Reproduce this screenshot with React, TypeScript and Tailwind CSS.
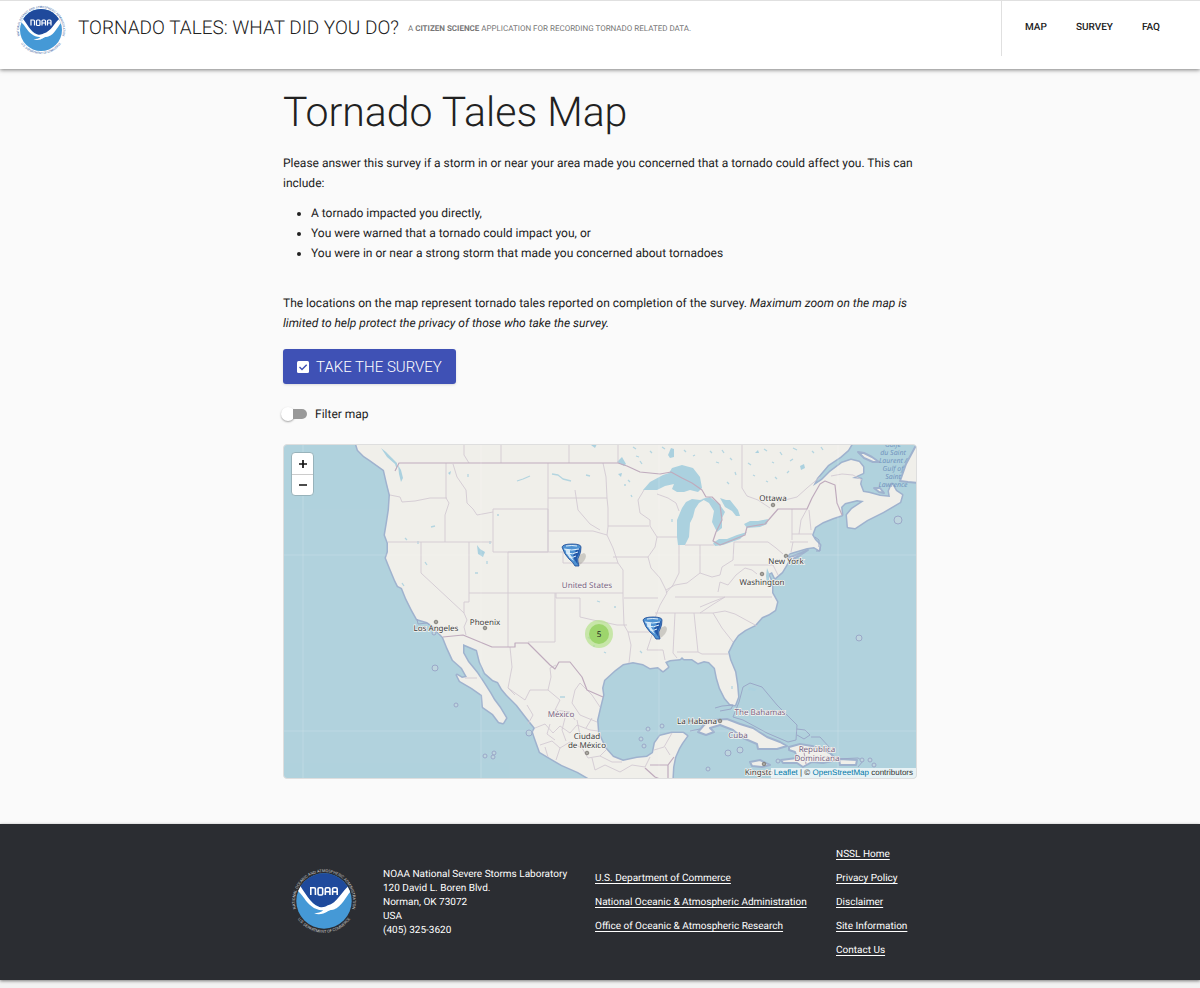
import { useState } from "react";

const navLinks = ["Map", "Survey", "FAQ"];

const agencyLinks = [
  "U.S. Department of Commerce",
  "National Oceanic & Atmospheric Administration",
  "Office of Oceanic & Atmospheric Research",
];

const siteLinks = [
  "NSSL Home",
  "Privacy Policy",
  "Disclaimer",
  "Site Information",
  "Contact Us",
];

const mainland =
  "M355 440L358 450L364 456L370 460L377 465L384 470L387 483L390 495L389 510L387 523L385 535L388 543L388 552L386 558L390 568L395 580L398 586L402 588L406 598L412 610L417 619L427 622L433 626L438 632L443 637L447 647L453 660L462 668L467 677L462 678L457 675L460 681L472 688L482 695L483 707L493 714L499 722L503 723L506 718L500 708L494 700L490 693L483 682L477 673L468 662L463 653L463 644L470 647L477 650L480 662L485 673L493 680L498 682L502 689L507 695L517 705L527 718L535 728L533 732L535 738L540 752L550 758L562 765L578 772L590 779L590 785L672 785L673 767L675 757L679 748L682 743L687 736L683 733L672 733L660 736L655 743L653 753L647 757L637 758L623 761L613 757L605 748L598 733L597 720L600 707L603 695L602 688L604 680L615 670L623 664L633 662L643 664L650 668L658 667L663 671L668 667L665 662L670 660L680 659L682 657L684 659L692 659L698 663L704 661L709 662L715 668L717 678L720 688L725 698L730 704L735 705L738 697L737 685L735 672L730 660L728 652L733 642L738 635L745 630L755 625L762 617L769 614L775 610L777 602L772 593L772 583L768 574L772 572L775 578L782 572L788 562L787 556L790 553L807 548L814 547L819 550L820 545L815 540L812 535L815 527L823 522L833 518L842 515L841 507L845 503L857 500L864 501L852 509L847 515L848 527L855 528L867 520L883 512L900 502L902 495L896 491L892 484L889 491L890 497L880 496L869 493L863 492L860 484L861 479L852 478L863 473L863 467L859 462L851 460L842 463L830 472L822 480L813 486L817 478L828 465L840 457L848 450L854 440Z";

const islands = [
  "M920 438L906 464L900 481L908 482L920 483L920 438Z",
  "M858 452L864 453L872 457L879 462L873 462L864 458Z",
  "M874 488L880 488L884 493L879 492Z",
  "M788 558L801 553L808 550L799 556L789 561Z",
  "M698 732L704 725L713 720L727 719L740 724L753 728L767 737L780 742L787 746L777 749L758 749L757 744L743 738L733 730L720 725L710 728L714 732L706 735Z",
  "M789 747L800 744L812 746L817 748L830 753L837 760L823 763L812 762L803 767L797 763L783 763L781 760L797 758L795 752L789 750Z",
  "M839 759L857 760L856 765L840 765Z",
  "M750 762L760 760L770 765L762 767L752 766Z",
];

const lakes = [
  "M643 490L650 482L663 475L669 473L672 468L682 465L693 468L700 477L702 488L698 492L690 490L684 492L677 492L672 489L674 484L665 486L657 490Z",
  "M682 508L686 502L692 499L700 500L707 498L699 503L695 509L693 517L690 523L689 537L685 545L678 545L677 537L677 520Z",
  "M702 499L710 497L720 505L725 512L722 518L722 528L717 532L712 522L714 511L709 503Z",
  "M720 498L726 500L730 500L738 510L740 516L736 516L732 511L725 507Z",
  "M713 543L719 539L727 539L737 535L747 532L740 539L723 545L715 546Z",
  "M744 524L750 521L758 521L768 519L767 524L760 527L747 528Z",
  "M671 448L674 449L674 457L670 458L668 455Z",
  "M617 462L622 457L626 464L624 466Z",
  "M477 545L480 549L485 552L483 557L478 554Z",
  "M381 448L386 452L392 458L397 463L397 470L395 464L387 457Z",
  "M398 465L401 470L403 478L401 482L399 474Z",
  "M618 474L622 473L621 477Z",
  "M749 687L757 689L755 691L748 690Z",
  "M800 466L804 464L805 468L801 470Z",
  "M755 453L758 450L759 453Z",
  "M767 568L769 573L769 583L767 585L766 576Z",
  "M448 473L451 471L450 475Z",
  "M591 445L597 444L595 448Z",
];

// short strokes for reservoirs and small lakes
const ponds =
  "M468 474v3M517 481l6-2 7-3M552 474l6 1 5 4 8 2M586 475l4 1M636 456l3 1M640 461l2 3M633 447l3 2M650 451l2 2M662 447l3 2M684 450l2 2M693 456l2-1M710 451l2 2M716 462l3 1M722 450l2 3M730 458l2 2M735 472l1 3M727 482l2 2M748 463l3 2M753 475l2 1M764 449l3 2M772 462l2 1M780 452l2 3M790 461l3-2M787 473l2-2M766 481l2 1M775 477l2 2M793 448l4 2M812 451l2 2M821 447l2 3M628 480l2 2M624 485l2 0M631 495l1 2M405 538l2 2M418 541v3M431 527l4-1M425 562l2 3M402 583l2 3M487 561v3M475 573h3M490 541v3M604 652l2 1M588 637l2 2M593 646h2M640 651l2 2M732 686v3M614 607h2M597 601l3 1M497 515h2M672 519v3M560 697h5";

const stateLines =
  "M390 495L400 497L402 502L415 501L430 498L447 498M446 463V498L449 503L445 515V542M388 542H492M421 542V573L464 613M464 613V602H469V542M453 464L457 477L466 490L467 503L473 509L477 515L493 512M493 509H548V552H493ZM508 552V647M469 593H623M508 552H563V563H618M555 593V642H528M548 463V552M548 498H607M548 531H593L607 535M603 463L606 477L607 498L608 508V527L607 535L613 548L618 563L623 570V598L624 625L628 632L631 645L629 663M608 526H649M613 557H648M556 593V598H580V617L593 620L603 622L617 625L627 625M644 490L638 500L640 513L650 520L650 526L657 537L655 547L648 557L651 568L660 578L665 588L667 593L660 605L655 618L653 632L647 650H663L665 660M624 598H658M657 537H677M679 545V573L673 585L666 593M700 545V573M685 545H714M666 590L675 585L687 583L700 573L712 577L720 575L722 567L733 560L734 542H768M734 565H773M675 597H772M655 613H713L722 628L733 642M713 613L725 611L735 614L757 626M700 607L712 602L725 597M675 613L673 653L677 658M694 613L698 652H677M698 652L702 654L728 654M628 632H650M768 542L776 548L783 554M792 509V540M807 509L801 520L799 534M809 510L811 530M792 534H812M790 542H808M793 542L791 552M718 592L720 582L728 585L736 575L745 568L752 570L757 574M773 565L778 575M657 494L668 498L676 503L679 511M464 444L464 455L469 463M501 444V463M569 444V463M618 444V463M742 444V488L747 496L758 500L770 508M777 502L797 497L807 488L820 477M831 476L842 474L853 475M853 475L862 480M725 597L712 605L700 613M575 490L578 510L590 524L600 530M464 613L467 620L464 627L466 635";

const mexicoLines =
  "M465 678H477M510 647L512 667L508 688L515 695M508 688L525 700L530 690L548 690L551 677L550 668L556 665M548 690L560 700L555 710L570 712L575 720M575 690L580 683L592 695L600 707M575 690L572 703L580 715L597 722M527 705L533 715L528 724M535 728L545 724L553 733L560 726L570 733L577 725L590 730L598 731M540 745L552 741L560 748L570 742L582 748L592 745M560 748L556 760M582 748L588 758L600 756L606 750M592 758L595 770L605 765L620 772L632 765L645 767L650 757M550 724L547 734L555 740M565 718L562 730L566 741M577 720L580 735L585 740M600 756L612 762L622 762M592 718L586 728M672 733L664 747L654 750M665 747L670 755M545 747L548 757";

const borders =
  "M395 471L399 463H618L627 466L640 472L650 473L660 474L671 472L682 478L692 483L702 490L706 497L712 497L720 505L722 520L716 532L713 541L720 545L745 535L747 527L765 524L778 509H807L812 498L820 484L825 481L830 483L835 485L837 503L842 515M443 637L463 635L492 647H515V643H528L540 655L550 665L555 669L559 662L570 662L582 677L587 690L603 697M645 768L655 777L660 779M650 765H668V779M668 765L674 757M803 746L806 764";

const maritime =
  "M743 687L750 683L762 687L777 705L797 725L796 740L788 742L767 733L743 720L733 717L739 702ZM797 729L805 730L810 735L804 739L797 735M811 737L820 737L830 748M715 708L722 706L733 705L731 709L720 711M700 729L690 731M819 547V540L815 537M816 551L820 551V547M837 759L858 758L863 761L858 767M417 619L418 624L427 623L433 628";

const islets = [
  [435, 668, 3],
  [456, 705, 2],
  [485, 756, 2],
  [494, 753, 2],
  [493, 757, 2],
  [529, 733, 3],
  [641, 739, 2],
  [644, 746, 2],
  [648, 729, 2],
  [662, 726, 2],
  [728, 753, 3],
  [740, 750, 3],
  [778, 761, 2],
  [708, 769, 2],
  [859, 638, 3],
  [898, 520, 4],
  [870, 760, 2],
  [874, 765, 2],
  [862, 760, 2],
  [434, 633, 2],
];

const placeLabels = [
  { name: "Ottawa", x: 773, y: 501 },
  { name: "New York", x: 786, y: 564 },
  { name: "Washington", x: 762, y: 585 },
  { name: "Los Angeles", x: 436, y: 631 },
  { name: "Phoenix", x: 485, y: 625 },
  { name: "La Habana", x: 697, y: 724 },
  { name: "Ciudad", x: 587, y: 739 },
  { name: "de México", x: 587, y: 748 },
  { name: "Kingsto", x: 759, y: 775 },
];

const countryLabels = [
  { name: "United States", x: 587, y: 588 },
  { name: "México", x: 561, y: 717 },
  { name: "The Bahamas", x: 760, y: 715 },
  { name: "Cuba", x: 738, y: 738 },
  { name: "República", x: 817, y: 752 },
  { name: "Dominicana", x: 817, y: 761 },
];

const gulfLabel = ["Golfe", "du Saint", "Laurent /", "Gulf of", "Saint", "Lawrence"];

const cityDots = [
  [773, 505],
  [786, 556],
  [762, 574],
  [436, 622],
  [485, 628],
  [720, 721],
  [587, 753],
  [764, 764],
];

function NoaaLogo({ id, ring, className }: { id: string; ring: string; className: string }) {
  return (
    <svg viewBox="0 0 100 100" className={className} role="img" aria-label="NOAA logo">
      <defs>
        <clipPath id={`${id}-disc`}>
          <circle cx="50" cy="50" r="42" />
        </clipPath>
        <path id={`${id}-top`} d="M13 74A44 44 0 1 1 87 74" />
        <path id={`${id}-bottom`} d="M5 67A48 48 0 0 0 95 67" />
      </defs>
      <g clipPath={`url(#${id}-disc)`}>
        <rect width="100" height="100" fill="#4599d6" />
        <path
          d="M0 0H100V20L90 27C80 39 72 56 57 60C51 63 46 62 41 58C29 53 22 37 12 28L0 22Z"
          fill="#1f4a9c"
        />
        <path
          d="M12 25C20 34 29 55 43 59C48 60 52 59 55 57C71 53 76 35 90 25L93 33C86 38 80 54 69 61C64 64 60 63 56 65C49 70 43 71 35 69C40 68 46 67 49 64C36 65 26 55 20 46C15 39 12 35 6 32Z"
          fill="#fff"
        />
        <path d="M49 64C56 61 61 61 67 62C61 63 58 63 53 67Z" fill="#fff" />
      </g>
      <path
        d="M30 41V30H35Q37 30 37 32V41M41 32Q41 30 43 30H46Q48 30 48 32V39Q48 41 46 41H43Q41 41 41 39ZM52 41V32Q52 30 54 30H57Q59 30 59 32V41M52 36H59M63 41V32Q63 30 65 30H68Q70 30 70 32V41M63 36H70"
        fill="none"
        stroke="#fff"
        strokeWidth="2.4"
      />
      <g fill={ring} fontFamily="Roboto, sans-serif" fontSize="6" aria-hidden="true">
        <text textAnchor="middle">
          <textPath href={`#${id}-top`} startOffset="50%">
            NATIONAL OCEANIC AND ATMOSPHERIC ADMINISTRATION
          </textPath>
        </text>
        <text textAnchor="middle">
          <textPath href={`#${id}-bottom`} startOffset="50%">
            U.S. DEPARTMENT OF COMMERCE
          </textPath>
        </text>
      </g>
    </svg>
  );
}

function TornadoMarker({ x, y }: { x: number; y: number }) {
  return (
    <g transform={`translate(${x} ${y})`}>
      <path d="M14 21L17 11L22 9Q26 11 22 17Q19 21 15 22Z" fill="#8a867e" opacity="0.35" />
      <path
        d="M0 3Q1 0 10 0Q19 0 19 3Q19 9 17 12Q15 15 16 18L17 22H13Q11 18 7 15Q2 10 0 3Z"
        fill="#4f92d2"
        stroke="#1d4792"
        strokeWidth="0.8"
      />
      <path d="M3 5L8 6V10L12 17Q5 13 3 5Z" fill="#cfe6f8" />
      <path d="M14 6L18 4Q18 9 16 12Q14 14 15 17L16 21L12 15L11 12Z" fill="#2459a9" />
      <path d="M4 2Q10 1 15 2M2 5Q10 7 17 5M4 9Q11 11 16 8M7 13Q11 14 14 12" fill="none" stroke="#e3f2fc" />
    </g>
  );
}

function TalesMap() {
  return (
    <section
      aria-label="Map of tornado tales"
      className="relative mt-5 overflow-hidden rounded-sm border border-[#dedede] bg-[#b1d2dd]"
    >
      <svg viewBox="284 445 632 333" className="block w-full" fontFamily="Noto Sans, sans-serif">
        <g strokeLinejoin="round">
          <path d={mainland} fill="#f0efea" stroke="#9fb2ce" strokeWidth="3" />
          {islands.map((d) => (
            <path key={d} d={d} fill="#f0efea" stroke="#9fb2ce" strokeWidth="2" />
          ))}
          <path d={mainland} fill="#f0efea" />
          {lakes.map((d) => (
            <path key={d} d={d} fill="#abd1df" />
          ))}
          <path d={ponds} fill="none" stroke="#b4d5e0" strokeWidth="1.3" />
          <path d={stateLines} fill="none" stroke="#d2cad2" strokeWidth="0.9" />
          <path d={mexicoLines} fill="none" stroke="#d2cad2" strokeWidth="0.9" />
          <path d={borders} fill="none" stroke="#bfabbd" strokeWidth="1.2" />
          <path d={maritime} fill="none" stroke="#9aa8c8" />
          {islets.map(([x, y, r]) => (
            <ellipse key={`${x}-${y}`} cx={x} cy={y} rx={r} ry={r} fill="#bed5de" stroke="#9aa8c8" />
          ))}
          <path
            d="M303 444V779M481 444V779M659 444V779M838 444V779M283 555H917M283 731H917"
            stroke="#fff"
            strokeWidth="0.7"
            opacity="0.25"
          />
        </g>

        <g fill="#a7a5a0" stroke="#77756f" strokeWidth="0.8">
          {cityDots.map(([x, y]) => (
            <circle key={`${x}-${y}`} cx={x} cy={y} r="1.8" />
          ))}
        </g>

        <g textAnchor="middle" fontSize="8" stroke="#f5f4f0" strokeWidth="1.5" paintOrder="stroke">
          {placeLabels.map(({ name, x, y }) => (
            <text key={name} x={x} y={y} fill="#3d3d3d">
              {name}
            </text>
          ))}
          {countryLabels.map(({ name, x, y }) => (
            <text key={name} x={x} y={y} fill="#796484">
              {name}
            </text>
          ))}
        </g>
        <g textAnchor="middle" fontSize="7" fontStyle="italic" fill="#7294be">
          {gulfLabel.map((line, i) => (
            <text key={line} x="893" y={447 + i * 8}>
              {line}
            </text>
          ))}
        </g>

        <TornadoMarker x={562} y={544} />
        <TornadoMarker x={643} y={617} />
        <circle cx="599" cy="634" r="14" fill="#b5e28c" opacity="0.7" />
        <circle cx="599" cy="634" r="10" fill="#9dd56c" />
        <text x="599" y="637" textAnchor="middle" fontSize="8" fill="#222">
          5
        </text>
      </svg>

      <div className="absolute left-[7px] top-[7px] flex w-[23px] flex-col overflow-hidden rounded-sm border border-[#98b3bb] bg-white">
        <button
          type="button"
          aria-label="Zoom in"
          className="flex h-[22px] items-center justify-center border-b border-[#ccc]"
        >
          <svg viewBox="0 0 10 10" className="size-[10px]" stroke="#111" strokeWidth="1.7">
            <path d="M5 1V9M1 5H9" />
          </svg>
        </button>
        <button type="button" aria-label="Zoom out" className="flex h-5 items-center justify-center">
          <svg viewBox="0 0 10 10" className="size-[10px]" stroke="#111" strokeWidth="1.7">
            <path d="M1 5H9" />
          </svg>
        </button>
      </div>

      <div className="absolute bottom-0 right-0 bg-white/70 px-[3px] font-['Liberation_Sans',sans-serif] text-[8px] leading-[10px] text-[#333]">
        <a href="#leaflet" className="text-[#0078a8]">
          Leaflet
        </a>{" "}
        | ©{" "}
        <a href="#osm" className="text-[#0078a8]">
          OpenStreetMap
        </a>{" "}
        contributors
      </div>
    </section>
  );
}

export default function App() {
  const [filterMap, setFilterMap] = useState(false);

  return (
    <div className="flex min-h-screen flex-col bg-[#fafafa] font-[Roboto,sans-serif] text-xs text-[#212121] [text-rendering:geometricPrecision]">
      <header className="flex h-[69px] items-start border-t border-[#e0e0e0] bg-white pl-4 shadow-[0_1px_4px_rgba(0,0,0,0.5)]">
        <NoaaLogo id="header-logo" ring="#4268a5" className="mt-1 size-[50px] shrink-0" />
        <div className="ml-3 flex h-[53px] items-center">
          <span className="text-[19px] font-light uppercase">Tornado Tales: What did you do?</span>
          <span className="ml-[9px] pt-[3px] text-[8px] uppercase text-[#777]">
            A <b className="font-bold">Citizen Science</b> application for recording tornado related data.
          </span>
        </div>
        <nav className="ml-auto flex h-[55px] items-center gap-[29px] border-l border-[#e0e0e0] pb-px pl-[23px] pr-10 text-[10px] font-medium uppercase">
          {navLinks.map((link) => (
            <a key={link} href={`#${link.toLowerCase()}`}>
              {link}
            </a>
          ))}
        </nav>
      </header>

      <main className="mx-auto w-full max-w-[634px] flex-1 pb-[45px] pt-5 leading-5">
        <h1 className="text-[41px] font-light leading-[48px]">Tornado Tales Map</h1>
        <p className="mt-4">
          Please answer this survey if a storm in or near your area made you concerned that a tornado
          could affect you. This can include:
        </p>
        <ul className="mt-[10px] list-disc pl-7">
          <li>A tornado impacted you directly,</li>
          <li>You were warned that a tornado could impact you, or</li>
          <li>You were in or near a strong storm that made you concerned about tornadoes</li>
        </ul>
        <p className="mt-[30px]">
          The locations on the map represent tornado tales reported on completion of the survey.{" "}
          <em>
            Maximum zoom on the map is limited to help protect the privacy of those who take the survey.
          </em>
        </p>

        <button
          type="button"
          className="mt-4 flex h-[35px] items-center gap-[7px] rounded-[3px] bg-[#3f51b5] px-[14px] text-[15px] font-light uppercase text-white shadow-sm"
        >
          <svg viewBox="0 0 12 12" className="size-3">
            <rect width="12" height="12" rx="1.5" fill="#fff" />
            <path d="M2.5 6L5 8.5L9.7 3.7" fill="none" stroke="#3f51b5" strokeWidth="1.4" />
          </svg>
          Take the survey
        </button>

        <label className="mt-5 flex h-5 w-fit cursor-pointer items-center gap-2">
          <span className="flex h-[10px] w-6 items-center">
            <input
              type="checkbox"
              role="switch"
              checked={filterMap}
              onChange={(e) => setFilterMap(e.target.checked)}
              className="peer sr-only"
            />
            <span className="-ml-[2px] size-[14px] shrink-0 rounded-full bg-white shadow-[0_1px_2px_rgba(0,0,0,0.35)] peer-checked:order-last" />
            <span className="-ml-[2px] h-[10px] flex-1 rounded-r-full bg-[#999]" />
          </span>
          Filter map
        </label>

        <TalesMap />
      </main>

      <div className="bg-[#f2f2f2] pb-2">
        <footer className="bg-[#2b2d32] text-[10px] leading-[14px] text-white shadow-[0_1px_3px_rgba(0,0,0,0.5)]">
          <div className="mx-auto flex h-[156px] w-full max-w-[634px] items-center pl-2 pt-[2px]">
            <NoaaLogo id="footer-logo" ring="#c3c3c3" className="mb-1 size-[66px] shrink-0" />
            <address className="ml-[26px] w-[212px] not-italic">
              NOAA National Severe Storms Laboratory
              <br />
              120 David L. Boren Blvd.
              <br />
              Norman, OK 73072
              <br />
              USA
              <br />
              (405) 325-3620
            </address>
            <ul className="w-[241px] space-y-[10px]">
              {agencyLinks.map((link) => (
                <li key={link}>
                  <a href="#agency" className="underline underline-offset-2">
                    {link}
                  </a>
                </li>
              ))}
            </ul>
            <ul className="space-y-[10px] whitespace-nowrap">
              {siteLinks.map((link) => (
                <li key={link}>
                  <a href="#site" className="underline underline-offset-2">
                    {link}
                  </a>
                </li>
              ))}
            </ul>
          </div>
        </footer>
      </div>
    </div>
  );
}
